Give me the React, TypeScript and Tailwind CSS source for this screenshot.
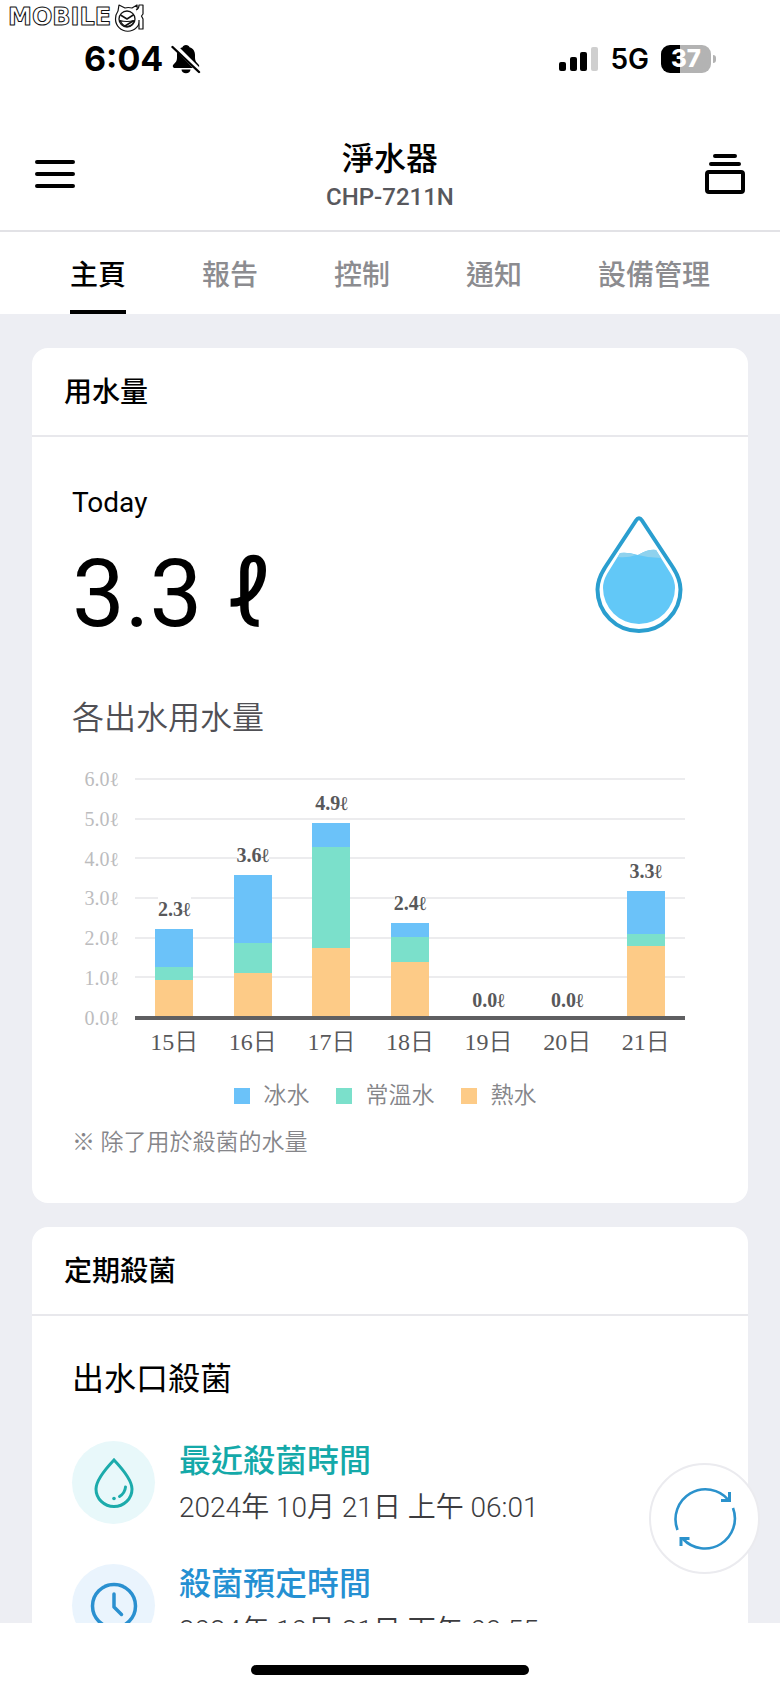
import { ReactNode, useState } from 'react';

type DayUsage = {
    day: string;
    total: string;
    cold: number;
    normal: number;
    hot: number;
};

// bar parts are in pixels, 40px is one litre
const usage: DayUsage[] = [
    { day: '15日', total: '2.3ℓ', cold: 38, normal: 13, hot: 36 },
    { day: '16日', total: '3.6ℓ', cold: 68, normal: 30, hot: 43 },
    { day: '17日', total: '4.9ℓ', cold: 24, normal: 101, hot: 68 },
    { day: '18日', total: '2.4ℓ', cold: 14, normal: 25, hot: 54 },
    { day: '19日', total: '0.0ℓ', cold: 0, normal: 0, hot: 0 },
    { day: '20日', total: '0.0ℓ', cold: 0, normal: 0, hot: 0 },
    { day: '21日', total: '3.3ℓ', cold: 43, normal: 12, hot: 70 },
];

const levels = ['6.0ℓ', '5.0ℓ', '4.0ℓ', '3.0ℓ', '2.0ℓ', '1.0ℓ', '0.0ℓ'];

const legend = [
    { label: '冰水', color: 'bg-[#6bc2f9]' },
    { label: '常溫水', color: 'bg-[#7be0cb]' },
    { label: '熱水', color: 'bg-[#fdcb87]' },
];

const tabs = ['主頁', '報告', '控制', '通知', '設備管理'];

function SiteLogo() {
    return (
        <svg
            className="absolute left-2 top-1"
            width="138"
            height="28"
            viewBox="0 0 138 28"
            fill="none"
            stroke="#111"
            strokeLinejoin="round"
        >
            <text
                x="0"
                y="21"
                fontSize="24"
                fontWeight="700"
                fontFamily="DejaVu Sans"
                fill="#fff"
                strokeWidth="1"
            >
                MOBILE
            </text>
            <path
                d="m110 7 1-6 6 3q3-1 7 0l5-3 .5 7q2.500 3 2.500 7a12 12 0 0 1-24.500 0q0-4.500 2.500-8z"
                fill="#fff"
                strokeWidth="1.200"
            />
            <circle cx="119" cy="15" r="8" strokeWidth="1.300" />
            <path d="m112.500 11 6.500 4 7-4.500" strokeWidth="1.500" />
            <path d="M112 16.500q7 2 14 0-1 5-7 6-5-1-7-6z" strokeWidth="1.200" />
            <path d="m117 22 8-5" strokeWidth="1.500" />
            <path
                d="M128 6q3-1 3-5h4v9l-1.500 2 1.500 3v10h-4V16"
                fill="#fff"
                strokeWidth="1.200"
            />
        </svg>
    );
}

function StatusBar() {
    return (
        <div className="flex h-[117px] shrink-0 items-center justify-between pl-[84px] pr-16">
            <div className="flex items-center gap-2 font-['Inter',sans-serif] text-[34px] font-bold leading-10">
                6:04
                <svg width="30" height="30" viewBox="0 0 30 30">
                    <path
                        d="M15 1c-2 0-3 1-3.500 2.200C7.500 4.500 6 7.500 6 11v3c0 3-1.500 4.500-3.500 6.500C1 22 2 24 4 24h22c2 0 3-2 1.500-3.500C25.500 18.500 24 17 24 14v-3c0-3.500-1.500-6.500-5.500-7.800C18 2 17 1 15 1zM10.500 25.500h9a4.500 3.800 0 0 1-9 0z"
                        fill="#000"
                    />
                    <path d="M2 .5 30 28.500" stroke="#fff" strokeWidth="5" />
                    <path
                        d="M1.500 3 28 28"
                        stroke="#000"
                        strokeWidth="2.400"
                        strokeLinecap="round"
                    />
                </svg>
            </div>
            <div className="flex items-center gap-3 font-['Inter',sans-serif]">
                <svg width="39" height="26" viewBox="0 0 39 26">
                    <rect x="0" y="16" width="7" height="9" rx="2" />
                    <rect x="11" y="11" width="7" height="14" rx="2" />
                    <rect x="21" y="6" width="7" height="19" rx="2" />
                    <rect x="32" y="1" width="7" height="24" rx="2" fill="#cfcfcf" />
                </svg>
                <span className="text-[28px] font-semibold leading-8">5G</span>
                <div className="flex items-center gap-[2px]">
                    <div className="flex h-7 w-[50px] items-center justify-center rounded-[9px] bg-linear-to-r from-black from-38% to-[#b3b3b3] to-38% text-2xl font-extrabold text-white">
                        37
                    </div>
                    <div className="h-2 w-[3px] rounded-r-full bg-[#b3b3b3]" />
                </div>
            </div>
        </div>
    );
}

function Card({ title, children }: { title: string; children: ReactNode }) {
    return (
        <section className="rounded-2xl bg-white">
            <h2 className="flex h-[89px] items-center border-b-2 border-[#e8e8ec] px-8 pt-[2px] text-[28px] font-medium leading-10">
                {title}
            </h2>
            {children}
        </section>
    );
}

function WaterDrop() {
    return (
        <svg width="88" height="118" viewBox="0 0 88 118">
            <path
                d="M41 4.500q3-4.500 6 0L77 50c6 9 8.500 15 8.500 23.500a41.500 41.500 0 0 1-83 0c0-8.500 2.500-14.500 8.500-23.500z"
                fill="#fff"
                stroke="#2a9ecf"
                strokeWidth="4"
            />
            <path
                d="M25 37q8-1 18 2 10-6 18-5l15 24q4 7 4 14a36 36 0 0 1-72 0q0-7 4-14z"
                fill="#62c8f7"
            />
            <path d="M25 37q8-1 16 2-8 3-18 2zM43 39q10-6 18-5l5 8q-12 0-23-3z" fill="#8fd2ee" />
        </svg>
    );
}

function UsageChart() {
    return (
        <div className="mr-[23px] mt-9 flex font-['Liberation_Serif','Noto_Sans_CJK_TC',serif] text-[#58585a]">
            <ul className="-mt-[9px] flex h-[259px] w-[63px] shrink-0 flex-col justify-between pr-4 text-right text-xl leading-5 text-[#bcbcbe]">
                {levels.map((level) => (
                    <li key={level}>{level}</li>
                ))}
            </ul>
            <div className="flex-1">
                <div className="relative h-[242px]">
                    <div className="absolute inset-0 flex flex-col justify-between">
                        {levels.map((level, i) => (
                            <div
                                key={level}
                                className={
                                    i === levels.length - 1
                                        ? 'h-1 bg-[#5f5f61]'
                                        : 'h-[2px] bg-[#ececee]'
                                }
                            />
                        ))}
                    </div>
                    <div className="relative flex h-full items-end pb-1">
                        {usage.map((item) => (
                            <div
                                key={item.day}
                                className="flex flex-1 flex-col items-center"
                            >
                                <p
                                    className={`bg-white text-xl font-bold leading-6 ${
                                        item.total === '0.0ℓ' ? 'mb-1' : 'mb-2'
                                    }`}
                                >
                                    {item.total}
                                </p>
                                <div
                                    className="w-[38px] bg-[#6bc2f9]"
                                    style={{ height: item.cold }}
                                />
                                <div
                                    className="w-[38px] bg-[#7be0cb]"
                                    style={{ height: item.normal }}
                                />
                                <div
                                    className="w-[38px] bg-[#fdcb87]"
                                    style={{ height: item.hot }}
                                />
                            </div>
                        ))}
                    </div>
                </div>
                <div className="mt-[6px] flex text-2xl font-[350] leading-8">
                    {usage.map((item) => (
                        <p key={item.day} className="flex-1 text-center">
                            {item.day}
                        </p>
                    ))}
                </div>
            </div>
        </div>
    );
}

function CareItem({
    icon,
    iconStyle,
    title,
    titleStyle,
    time,
}: {
    icon: ReactNode;
    iconStyle: string;
    title: string;
    titleStyle: string;
    time: string;
}) {
    return (
        <li className="flex gap-6">
            <div
                className={`flex h-[83px] w-[83px] shrink-0 items-center justify-center rounded-full ${iconStyle}`}
            >
                {icon}
            </div>
            <div>
                <p className={`text-[32px] font-medium leading-10 ${titleStyle}`}>
                    {title}
                </p>
                <p className="mt-[7px] text-[28px] font-[350] leading-10 text-[#3c3c3f]">
                    {time}
                </p>
            </div>
        </li>
    );
}

export default function App() {
    const [activeTab, setActiveTab] = useState('主頁');

    return (
        <div
            lang="zh-Hant"
            className="relative flex h-screen flex-col bg-white font-['Roboto','Noto_Sans_CJK_TC',sans-serif] text-black"
        >
            <SiteLogo />
            <StatusBar />
            <header className="flex h-[115px] shrink-0 items-center justify-between border-b-2 border-[#e2e2e6] px-[35px]">
                <button aria-label="menu">
                    <svg width="40" height="40" viewBox="0 0 40 40">
                        <path
                            d="M2 8h36M2 20h36M2 32h36"
                            stroke="#000"
                            strokeWidth="4"
                            strokeLinecap="round"
                        />
                    </svg>
                </button>
                <div className="pt-1 text-center">
                    <h1 className="text-[32px] font-medium leading-10">淨水器</h1>
                    <p className="mt-[2px] text-2xl font-medium leading-8 text-[#58585d]">
                        CHP-7211N
                    </p>
                </div>
                <button aria-label="devices">
                    <svg
                        width="40"
                        height="40"
                        viewBox="0 0 40 40"
                        fill="none"
                        stroke="#000"
                        strokeWidth="4"
                        strokeLinecap="round"
                    >
                        <path d="M10 2h20M6 10h28" />
                        <rect x="2" y="18" width="36" height="20" rx="2" />
                    </svg>
                </button>
            </header>
            <nav className="flex h-[82px] shrink-0 justify-between px-[70px]">
                {tabs.map((tab) => (
                    <button
                        key={tab}
                        className={`border-b-4 pt-[10px] text-[28px] font-medium leading-10 ${
                            tab === activeTab
                                ? 'border-black text-black'
                                : 'border-transparent text-[#8c8c90]'
                        }`}
                        onClick={() => setActiveTab(tab)}
                    >
                        {tab}
                    </button>
                ))}
            </nav>
            <div className="relative min-h-0 flex-1">
                <main className="flex h-full flex-col gap-6 overflow-y-auto bg-[#edeef3] px-8 pt-[34px] [scrollbar-width:none]">
                    <Card title="用水量">
                        <div className="px-10 pb-11 pt-[46px]">
                            <div className="flex items-end justify-between pr-[25px]">
                                <div>
                                    <p className="text-[28px] leading-10">Today</p>
                                    <p className="mt-[15px] text-[94px] leading-[112px]">
                                        3.3 ℓ
                                    </p>
                                </div>
                                <div className="pb-4">
                                    <WaterDrop />
                                </div>
                            </div>
                            <h3 className="mt-11 text-[32px] font-[350] leading-[48px] text-[#505055]">
                                各出水用水量
                            </h3>
                            <UsageChart />
                            <ul className="mt-[22px] flex justify-center gap-[26px] pr-[10px] text-[23px] font-[350] leading-8 text-[#858589]">
                                {legend.map((item) => (
                                    <li
                                        key={item.label}
                                        className="flex items-center gap-[14px]"
                                    >
                                        <span className={`h-4 w-4 ${item.color}`} />
                                        {item.label}
                                    </li>
                                ))}
                            </ul>
                            <p className="mt-[15px] text-[23px] font-[350] leading-8 text-[#858589]">
                                ※ 除了用於殺菌的水量
                            </p>
                        </div>
                    </Card>
                    <Card title="定期殺菌">
                        <div className="px-10 pb-11 pt-[39px]">
                            <h3 className="text-[32px] leading-[48px]">出水口殺菌</h3>
                            <ul className="mt-[38px] flex flex-col gap-9">
                                <CareItem
                                    icon={
                                        <svg
                                            width="42"
                                            height="52"
                                            viewBox="0 0 42 52"
                                            fill="none"
                                            stroke="#1cabab"
                                            strokeWidth="3"
                                            strokeLinecap="round"
                                        >
                                            <path d="M21 3Q3 22 3 32a18 17.500 0 0 0 36 0Q39 22 21 3z" />
                                            <path d="M32.500 30q-.5 6-6 9.500" />
                                            <circle
                                                cx="21"
                                                cy="41.500"
                                                r="1.800"
                                                fill="#1cabab"
                                                stroke="none"
                                            />
                                        </svg>
                                    }
                                    iconStyle="bg-[#e8f8fa]"
                                    title="最近殺菌時間"
                                    titleStyle="text-[#14a9a9]"
                                    time="2024年 10月 21日 上午 06:01"
                                />
                                <CareItem
                                    icon={
                                        <svg
                                            width="48"
                                            height="48"
                                            viewBox="0 0 48 48"
                                            fill="none"
                                            stroke="#2a90d0"
                                            strokeWidth="3.500"
                                            strokeLinecap="round"
                                            strokeLinejoin="round"
                                        >
                                            <circle cx="24" cy="24" r="21.500" />
                                            <path d="M24 12v13l7.500 7.500" />
                                        </svg>
                                    }
                                    iconStyle="bg-[#eaf4fd]"
                                    title="殺菌預定時間"
                                    titleStyle="text-[#2590d2]"
                                    time="2024年 10月 21日 下午 09:55"
                                />
                            </ul>
                        </div>
                    </Card>
                </main>
                <button
                    aria-label="refresh"
                    className="absolute bottom-[49px] right-5 flex h-[111px] w-[111px] items-center justify-center rounded-full border-2 border-[#ebebef] bg-white"
                >
                    <svg
                        width="64"
                        height="64"
                        viewBox="0 0 64 64"
                        fill="none"
                        stroke="#2b92cc"
                        strokeWidth="2.600"
                    >
                        <path d="M4.500 43A30 30 0 0 1 55.500 13M60 21A30 30 0 0 1 10 52" />
                        <path d="M56.500 5v8.500H48M8 59v-7.500h8.500" strokeWidth="3" />
                    </svg>
                </button>
            </div>
            <footer className="flex h-[68px] shrink-0 items-end justify-center bg-white pb-4">
                <div className="h-[10px] w-[278px] rounded-full bg-black" />
            </footer>
        </div>
    );
}
